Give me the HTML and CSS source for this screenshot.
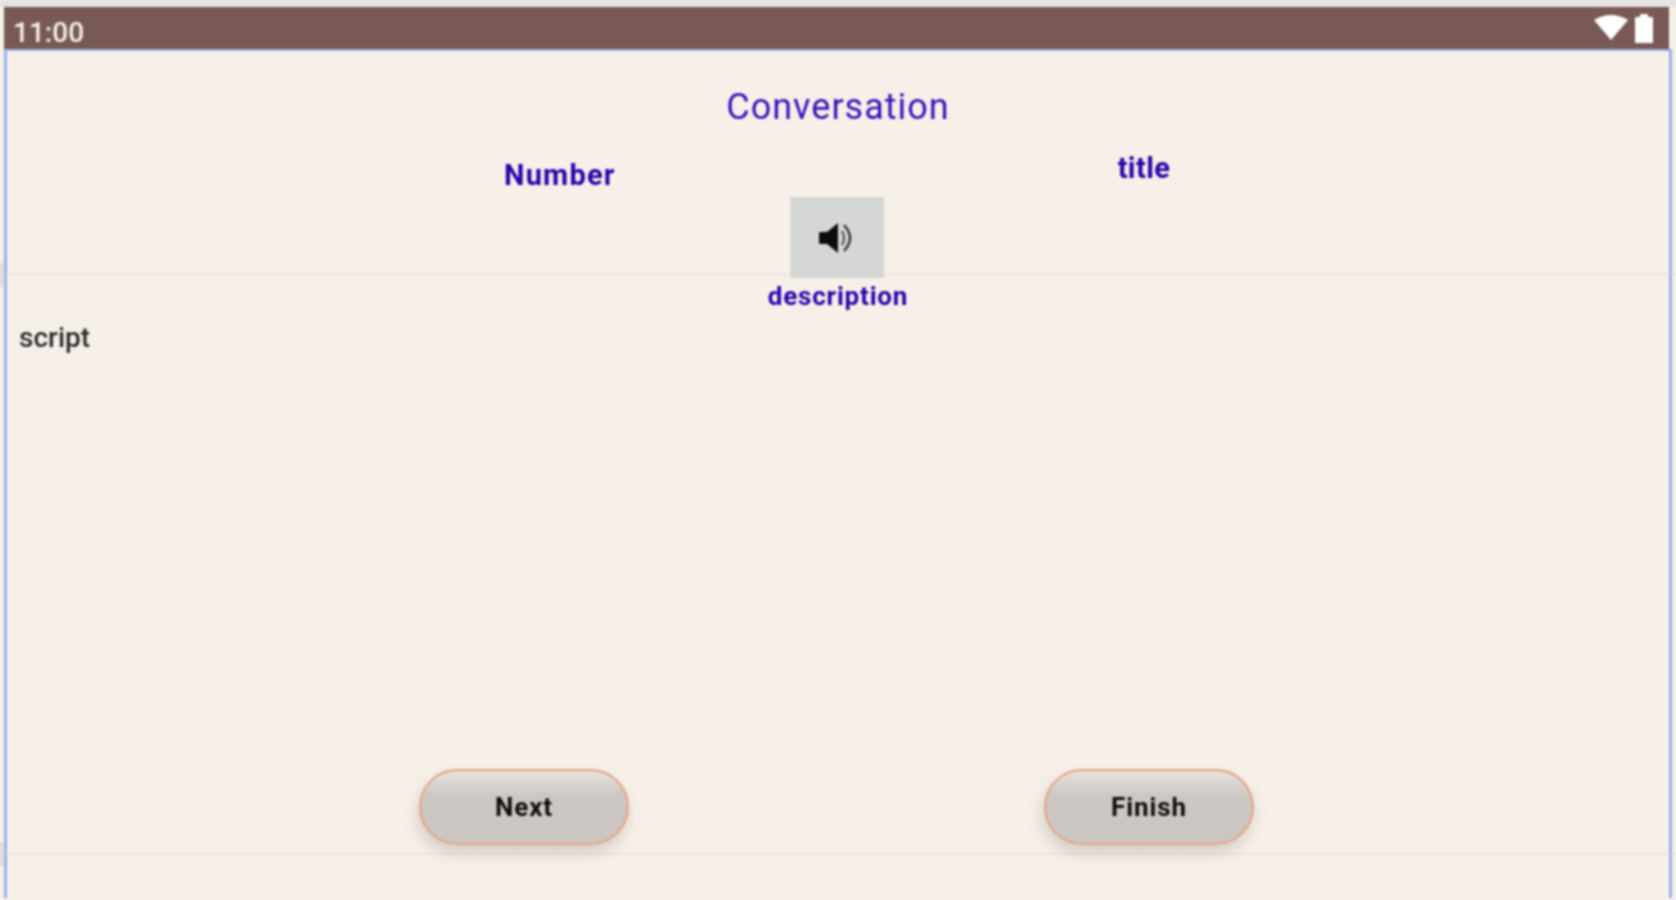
FILE: index.html
```html
<!DOCTYPE html>
<html lang="en">
<head>
    <meta charset="UTF-8">
    <title>Conversation</title>
    <link rel="stylesheet" href="styles.css">
</head>
<body>
    <div class="device">
        <!-- Status bar -->
        <div class="status-bar">
            <span class="clock">11:00</span>
            <div class="status-icons">
                <svg class="wifi" width="34" height="26" viewBox="0 0 34 26"><path d="M0 6 Q17 -4 34 6 L17 26 Z" fill="#fff"/></svg>
                <svg class="battery" width="20" height="29" viewBox="0 0 20 29"><path d="M1 4 Q1 3 2 3 H6 V0 H14 V3 H18 Q19 3 19 4 V29 H1 Z" fill="#fff"/></svg>
            </div>
        </div>

        <div class="screen">
            <div class="guide guide-top"></div>
            <div class="guide guide-bottom"></div>

            <h1 class="title">Conversation</h1>

            <div class="meta-row">
                <span class="label label-number">Number</span>
                <span class="label label-title">title</span>
            </div>

            <button class="speaker" aria-label="Play">
                <svg width="38" height="34" viewBox="0 0 38 34">
                    <path d="M1 12 Q1 11 3 11 H9 L20 2 V32 L9 23 H3 Q1 23 1 22 Z" fill="#0c0c0c"/>
                    <path d="M24 10 Q28 17 24 24" fill="none" stroke="#444" stroke-width="2"/>
                    <path d="M26 4 Q38 17 26 30" fill="none" stroke="#333" stroke-width="2.4"/>
                </svg>
            </button>

            <p class="label description">description</p>
            <p class="script">script</p>

            <div class="actions">
                <button class="button button-next">Next</button>
                <button class="button button-finish">Finish</button>
            </div>
        </div>
    </div>
</body>
</html>
```

FILE: styles.css
```css
/* Global Styles */
body {
    margin: 0;
    height: 900px;
    overflow: hidden;
    background-color: #f7f0e9;
    font-family: Roboto, "Liberation Sans", sans-serif;
}

.device {
    padding: 7px 0 0 4px;
    height: 893px;
    background: linear-gradient(to bottom, #e4e4e0 0, #e4e4e0 7px, #f7f0e9 7px);
    filter: blur(0.8px);
}

/* Status Bar */
.status-bar {
    width: 1665px;
    height: 42px;
    background-color: #795955;
    color: #f5f0ea;
    display: flex;
    justify-content: space-between;
    box-sizing: border-box;
    padding: 0 15px 0 9px;
}

.clock {
    font-size: 28px;
    font-weight: 500;
    line-height: 52px;
}

.status-icons {
    display: flex;
    gap: 6px;
    padding-top: 7px;
}

/* Main Screen */
.screen {
    position: relative;
    width: 1668px;
    height: 849px;
    box-sizing: border-box;
    border: 3px solid #96b0ee;
    border-bottom: none;
    border-top-width: 2px;
    text-align: center;
}

.guide {
    position: absolute;
    left: -7px;
    width: 1676px;
    border-top: 1px dashed #cfccc5;
}

.guide::before {
    content: "";
    position: absolute;
    left: 0;
    top: -12px;
    width: 3px;
    height: 24px;
    background-color: #dcdad5;
}

.guide-top {
    top: 223px;
}

.guide-bottom {
    top: 802px;
}

.title {
    margin: 0;
    padding-top: 33px;
    font-size: 36px;
    line-height: 46px;
    font-weight: 400;
    letter-spacing: 1px;
    color: #3a0cbc;
}

.label {
    font-weight: 700;
    color: #2602aa;
}

.meta-row {
    display: flex;
    align-items: flex-start;
    height: 67px;
    padding-left: 497px;
    font-size: 29px;
    line-height: 36px;
}

.label-number {
    margin-top: 27px;
    letter-spacing: 1.2px;
}

.label-title {
    margin-left: 502px;
    margin-top: 20px;
    letter-spacing: 0.4px;
}

.speaker {
    display: flex;
    align-items: center;
    justify-content: center;
    width: 94px;
    height: 81px;
    margin: 0 0 0 783px;
    padding: 0;
    border: none;
    background-color: #d5d7d5;
    position: relative;
}

.description {
    margin: 2px 0 0;
    font-size: 26px;
    line-height: 32px;
    letter-spacing: 0.8px;
}

.script {
    margin: 8px 0 0 12px;
    text-align: left;
    font-size: 28px;
    font-weight: 500;
    line-height: 36px;
    color: #2c2c2c;
}

.actions {
    display: flex;
    padding-left: 412px;
    gap: 415px;
    margin-top: 413px;
}

.button {
    width: 210px;
    height: 76px;
    box-sizing: border-box;
    padding: 0;
    border: 2px solid #e6a282;
    border-radius: 38px;
    background: linear-gradient(to bottom, #e6e2dd 0, #ccc7c2 35%, #cbc6c1 100%);
    box-shadow: -2px 8px 16px rgba(0, 0, 0, 0.15);
    font-family: Roboto, "Liberation Sans", sans-serif;
    font-size: 26px;
    font-weight: 700;
    letter-spacing: 0.9px;
    color: #120c0c;
    position: relative;
}
```
